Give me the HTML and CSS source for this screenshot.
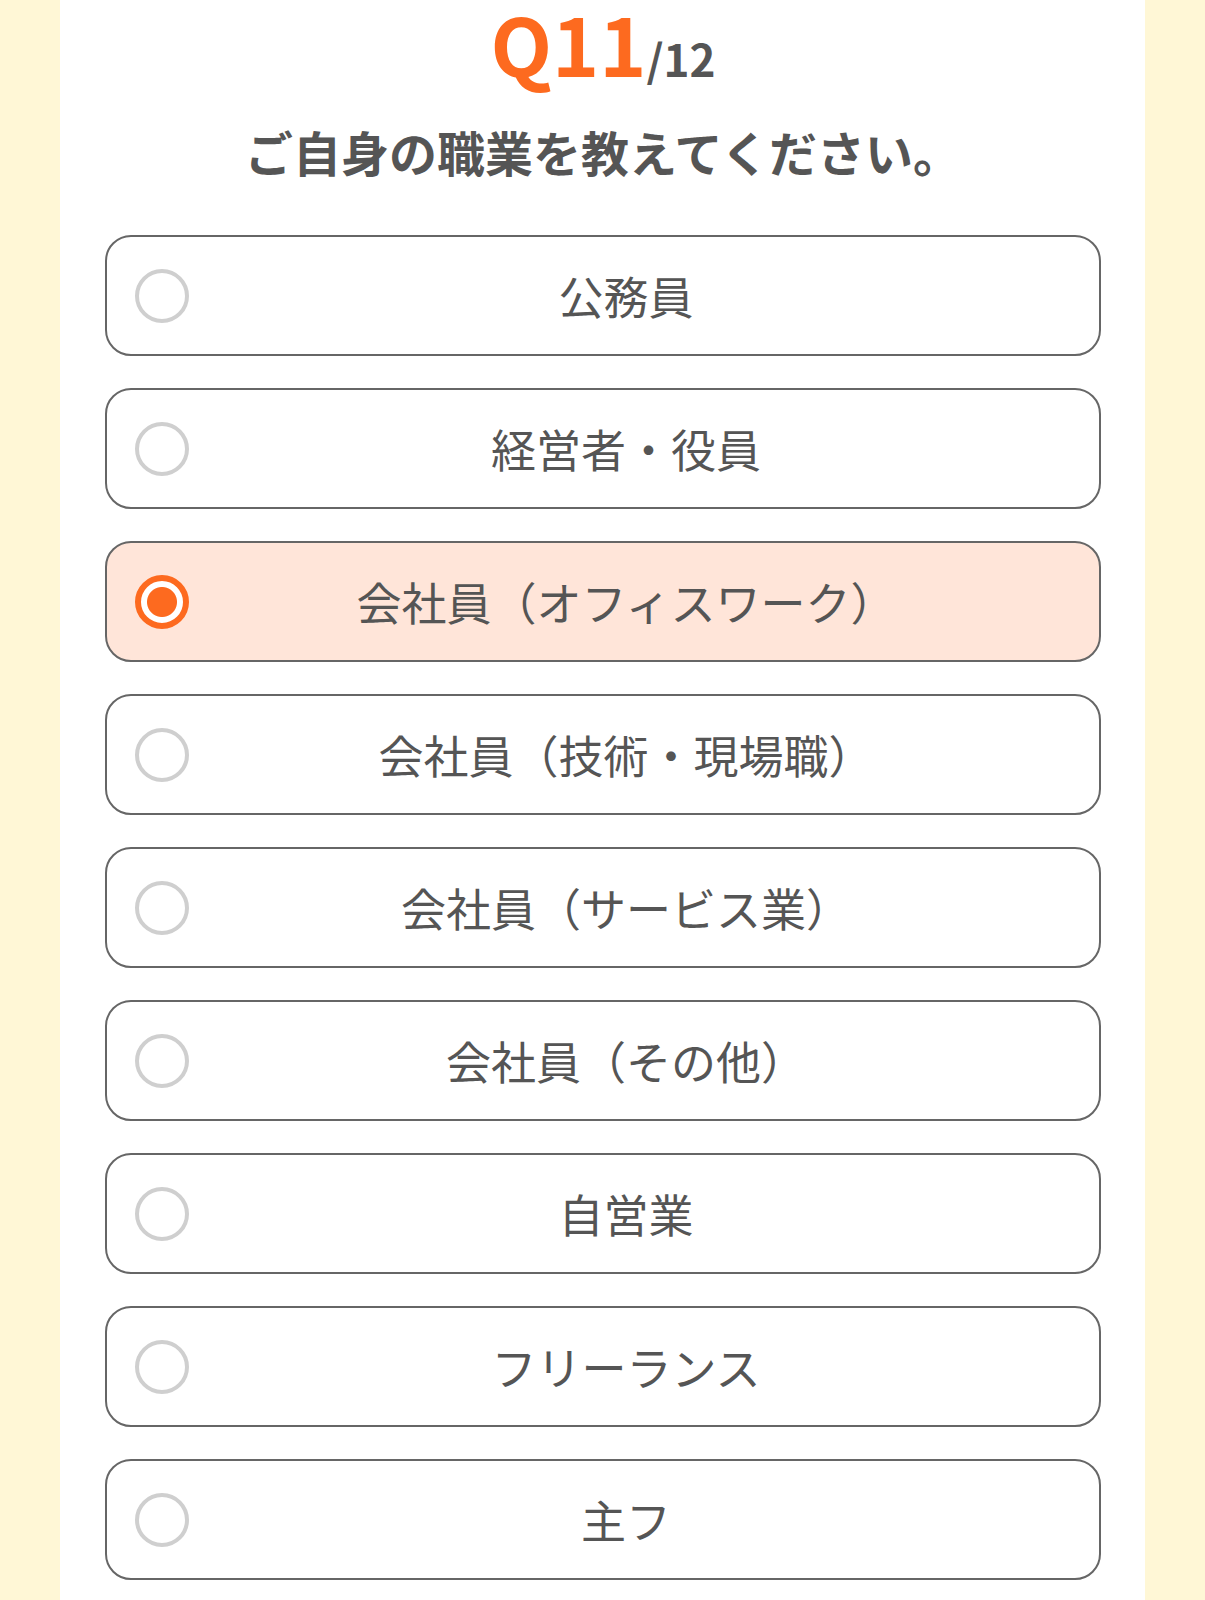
FILE: index.html
```html
<!DOCTYPE html>
<html lang="ja">
<head>
<meta charset="utf-8">
<title>Q11</title>
<link rel="stylesheet" href="styles.css">
</head>
<body>
<div class="page">
  <main class="panel">
    <h1 class="qnum"><span class="qcur">Q11</span><span class="qtotal">/12</span></h1>
    <p class="question">ご自身の職業を教えてください。</p>
    <ul class="options">
      <li class="option"><span class="radio"></span><span class="label">公務員</span></li>
      <li class="option"><span class="radio"></span><span class="label">経営者・役員</span></li>
      <li class="option selected"><span class="radio"></span><span class="label">会社員（オフィスワーク）</span></li>
      <li class="option"><span class="radio"></span><span class="label">会社員（技術・現場職）</span></li>
      <li class="option"><span class="radio"></span><span class="label">会社員（サービス業）</span></li>
      <li class="option"><span class="radio"></span><span class="label">会社員（その他）</span></li>
      <li class="option"><span class="radio"></span><span class="label">自営業</span></li>
      <li class="option"><span class="radio"></span><span class="label">フリーランス</span></li>
      <li class="option"><span class="radio"></span><span class="label">主フ</span></li>
    </ul>
  </main>
</div>
</body>
</html>
```

FILE: styles.css
```css
html, body {
  margin: 0;
  padding: 0;
}
body {
  background: #fff7d6;
  font-family: "Noto Sans CJK JP", "Noto Sans", sans-serif;
  color: #555;
}
.page {
  display: flex;
  justify-content: flex-start;
  padding-left: 60px;
}
.panel {
  width: 1085px;
  min-height: 1600px;
  background: #fff;
  box-sizing: border-box;
  padding: 0 44px 0 45px;
}
.qnum {
  margin: 0;
  font-weight: 700;
  height: 84px;
  display: flex;
  justify-content: center;
  align-items: baseline;
}
.qcur {
  color: #fd6a1f;
  font-size: 80px;
  line-height: 84px;
}
.qtotal {
  color: #555;
  font-size: 44px;
  line-height: 84px;
}
.question {
  margin: 31px 0 0;
  text-align: center;
  font-size: 48px;
  font-weight: 700;
  line-height: 72px;
}
.options {
  list-style: none;
  margin: 48px 0 0;
  padding: 0;
  display: flex;
  flex-direction: column;
  gap: 32px;
}
.option {
  box-sizing: border-box;
  height: 121px;
  border: 2px solid #666;
  border-radius: 26px;
  display: flex;
  align-items: center;
  padding: 0 36px 0 28px;
  background: #fff;
}
.option.selected {
  background: #ffe5d9;
}
.radio {
  box-sizing: border-box;
  width: 54px;
  height: 54px;
  border-radius: 50%;
  border: 4px solid #cfcfcf;
  background: #fff;
  flex: none;
}
.selected .radio {
  border: 6px solid #fd6a1f;
  background: radial-gradient(circle, #fd6a1f 0 14.5px, #fff 15.5px);
}
.label {
  flex: 1;
  text-align: center;
  font-size: 45px;
  line-height: 1;
  color: #555;
}
```
